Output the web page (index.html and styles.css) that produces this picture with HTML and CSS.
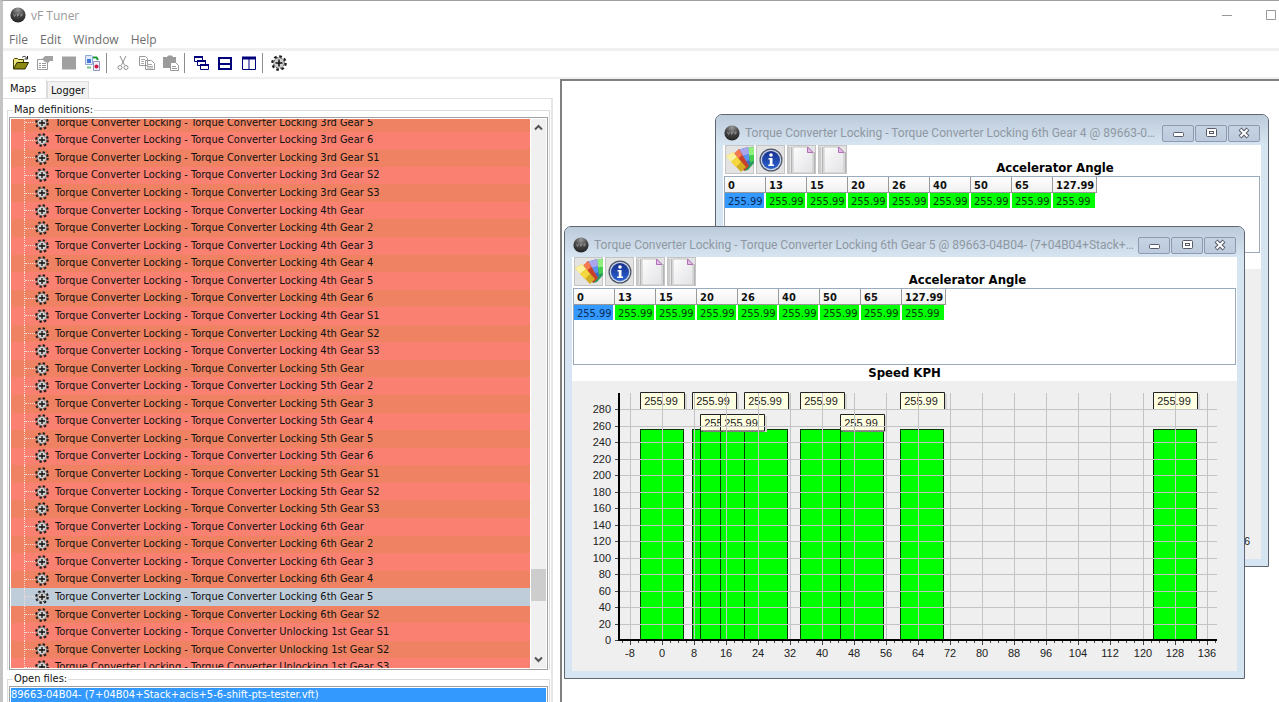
FILE: index.html
```html
<!DOCTYPE html>
<html lang="en">
<head>
    <meta charset="UTF-8">
    <title>vF Tuner</title>
    <meta name="viewport" content="width=device-width, initial-scale=1.0">
    <link rel="stylesheet" href="styles.css">
</head>
<body>

    <!-- Shared icons -->
    <svg class="defs" aria-hidden="true">
        <defs>
            <radialGradient id="ball" cx="50%" cy="15%" r="85%">
                <stop offset="0" stop-color="#9a9a9a"/>
                <stop offset="0.5" stop-color="#484848"/>
                <stop offset="1" stop-color="#222"/>
            </radialGradient>
            <linearGradient id="paper" x1="0" y1="0" x2="1" y2="1">
                <stop offset="0" stop-color="#fdfdfd"/>
                <stop offset="1" stop-color="#e2e2e6"/>
            </linearGradient>
            <linearGradient id="blue" x1="0" y1="0" x2="0" y2="1">
                <stop offset="0" stop-color="#16308c"/>
                <stop offset="1" stop-color="#2b62d0"/>
            </linearGradient>
        </defs>
        <symbol id="logo" viewBox="0 0 16 16">
            <circle cx="8" cy="8" r="7.6" fill="url(#ball)"/>
            <path d="M3.500 7l1 2.500L6 7M7.500 9.500V7h2M11 9.500V7H13M7.500 8.300h1.500M11 8.300h1.500" stroke="#999" stroke-width="0.8" fill="none"/>
        </symbol>
        <symbol id="gear" viewBox="0 0 16 16">
            <circle cx="8" cy="8" r="6.700" fill="none" stroke="#1c1c1c" stroke-width="2.200" stroke-dasharray="2.700 2.560"/>
            <circle cx="8" cy="8" r="5.400" fill="#cfcfcf" stroke="#444" stroke-width="1" stroke-dasharray="3 1.240"/>
            <path d="M8 4.500v7M4.500 8h7" stroke="#111" stroke-width="1.500"/>
        </symbol>
        <symbol id="palette" viewBox="0 0 28 28">
            <path d="M18 25l3-23 7-1v16l-6 7z" fill="#2c9a5c"/>
            <path d="M21 2l7-1v8l-7 1z" fill="#8ff07c"/>
            <path d="M21 10l7-1v6l-7 2z" fill="#45cf52"/>
            <path d="M17 24L12 4l10-3 2 17z" fill="#3f6cc8"/>
            <path d="M12 4l10-3 1 7-9 3z" fill="#a9a6ee"/>
            <path d="M14 11l9-3v6l-7 3z" fill="#5c93f0"/>
            <path d="M18 25L7 9l6-6 10 17z" fill="#c8402c"/>
            <path d="M7 9l6-6 3 6-5 5z" fill="#f47a50"/>
            <path d="M15 26L0 10l7-4 13 15z" fill="#d3ac20"/>
            <path d="M0 10l7-4 4 5-6 5z" fill="#fbf2a0"/>
            <path d="M5 16l6-5 4 5-5 5z" fill="#f5d740"/>
        </symbol>
        <symbol id="info" viewBox="0 0 24 24">
            <circle cx="12" cy="12" r="11.500" fill="#4c5468"/>
            <circle cx="12" cy="12" r="10.300" fill="#c9d3e6"/>
            <circle cx="12" cy="12" r="9" fill="url(#blue)"/>
            <circle cx="12" cy="7" r="1.800" fill="#fff"/>
            <path d="M9.500 10h4v6.500h1.500V18H9.300v-1.500h1.500v-5H9.500z" fill="#fff"/>
        </symbol>
        <symbol id="page" viewBox="0 0 28 28">
            <path d="M1 1v26M3.500 1v26M26.500 6v21" stroke="#b4b4b4"/>
            <path d="M5 1h15l5 5v21H5z" fill="url(#paper)" stroke="#c6c6c6"/>
            <path d="M19.500 1v5.500H25z" fill="#e3bde6" stroke="#b070b8"/>
        </symbol>
    </svg>

    <header class="title-bar">
        <svg class="app-logo"><use href="#logo"/></svg>
        <h1>vF Tuner</h1>
        <div class="app-controls">
            <button type="button" aria-label="Minimize"><svg width="10" height="10"><path d="M0 5.500h10" stroke="#999"/></svg></button>
            <button type="button" aria-label="Maximize"><svg width="10" height="10"><path d="M0.500 0.500h9v9h-9z" fill="none" stroke="#999"/></svg></button>
        </div>
    </header>

    <nav class="menu">
        <button type="button">File</button>
        <button type="button">Edit</button>
        <button type="button">Window</button>
        <button type="button">Help</button>
    </nav>

    <div class="toolbar">
        <button type="button" aria-label="Open">
            <svg viewBox="0 0 16 16"><path d="M0.500 14V4.500l1-1h3l1 1h5V7" fill="#e9e37a" stroke="#4a4600"/><path d="M0.500 14L4 7.500h11.500L12 14z" fill="#8e8a10" stroke="#2c2a00"/><path d="M9 2.500c2-2 4-1 5 1M14.500 1v3h-3" fill="none" stroke="#222"/></svg>
        </button>
        <button type="button" aria-label="Properties">
            <svg viewBox="0 0 16 16"><path d="M0.500 4.500h10v10h-10z" fill="#fff" stroke="#999"/><path d="M2 8.500h2M5 8.500h4M2 10.500h2M5 10.500h4M2 12.500h2M5 12.500h4" stroke="#999"/><path d="M5 4l3-3h8v5h-3l-2 2-3-1z" fill="#a2a2a2"/></svg>
        </button>
        <button type="button" aria-label="Save">
            <svg viewBox="0 0 16 16"><path d="M1 1.500h14v13H1z" fill="#a0a0a0"/></svg>
        </button>
        <button type="button" aria-label="Compare">
            <svg viewBox="0 0 16 16"><path d="M0.500 0.500h6l1 1v8h-7z" fill="#dfeaff" stroke="#8fa8d8"/><path d="M2 4h4v4H2z" fill="#4477d8"/><path d="M8.500 6.500h6v9h-6z" fill="#f3eef8" stroke="#8f95bd"/><circle cx="11.500" cy="11.500" r="2" fill="#d01840"/><path d="M8 2.500h3.500L13 5" fill="none" stroke="#1d9a38" stroke-width="2"/><path d="M2 12.500h4" stroke="#7cbf8a" stroke-width="2"/></svg>
        </button>
        <span class="sep"></span>
        <button type="button" aria-label="Cut">
            <svg viewBox="0 0 16 16"><path d="M5 1l4.500 9M11 1L6.500 10" stroke="#909090" fill="none"/><circle cx="5" cy="12.500" r="2" fill="none" stroke="#909090"/><circle cx="11" cy="12.500" r="2" fill="none" stroke="#909090"/></svg>
        </button>
        <button type="button" aria-label="Copy">
            <svg viewBox="0 0 16 16"><path d="M0.500 1.500h6l2 2v7h-8zM6.500 5.500h6l3 3v6h-9z" fill="#fff" stroke="#999"/><path d="M2 4.500h4M2 6.500h3M2 8.500h3M8 9.500h5M8 11.500h6M8 13h6" stroke="#aaa"/></svg>
        </button>
        <button type="button" aria-label="Paste">
            <svg viewBox="0 0 16 16"><path d="M0 2h4l1-1.500h4L10 2h3v11H0z" fill="#9b9b9b"/><path d="M7.500 7.500h5l3 3v5h-8z" fill="#fff" stroke="#999"/><path d="M9 11.500h4M9 13.500h5" stroke="#999"/></svg>
        </button>
        <span class="sep"></span>
        <button type="button" aria-label="Cascade">
            <svg viewBox="0 0 16 16" fill="#fff" stroke="#00007c"><path d="M1.500 1.500h8v5h-8zM4.500 5.500h8v5h-8zM7.500 9.500h8v5h-8z"/><path d="M1 2h9M4 6h9M7 10h9" stroke-width="2"/></svg>
        </button>
        <button type="button" aria-label="Tile horizontally">
            <svg viewBox="0 0 16 16" fill="#fff" stroke="#00007c"><path d="M2 3h12v11H2z" stroke-width="2"/><path d="M1 9h13" stroke-width="2"/></svg>
        </button>
        <button type="button" aria-label="Tile vertically">
            <svg viewBox="0 0 16 16" fill="#fff" stroke="#00007c"><path d="M1.500 2.500h13v12h-13zM8 2v12"/><path d="M1 3h14" stroke-width="3"/></svg>
        </button>
        <span class="sep"></span>
        <button type="button" aria-label="Settings"><svg><use href="#gear"/></svg></button>
    </div>

    <main class="workspace">

        <!-- Left side: maps tree and open files -->
        <aside class="sidebar">
            <div class="tabs" role="tablist">
                <button type="button" role="tab" aria-selected="true" class="tab active">Maps</button>
                <button type="button" role="tab" aria-selected="false" class="tab">Logger</button>
            </div>
            <div class="tab-page">
                <fieldset class="group maps-group">
                    <legend>Map definitions:</legend>
                    <div class="tree-box">
                        <div class="tree-view">
                            <ul class="tree" id="mapTree"></ul>
                        </div>
                        <div class="scrollbar">
                            <svg width="9" height="7"><path d="M1 5.500l3.500-3.500L8 5.500" fill="none" stroke="#555" stroke-width="2"/></svg>
                            <span class="track"><span class="thumb"></span></span>
                            <svg width="9" height="7"><path d="M1 1.500l3.500 3.500L8 1.500" fill="none" stroke="#555" stroke-width="2"/></svg>
                        </div>
                    </div>
                </fieldset>
                <fieldset class="group files-group">
                    <legend>Open files:</legend>
                    <ul class="file-list">
                        <li>89663-04B04- (7+04B04+Stack+acis+5-6-shift-pts-tester.vft)</li>
                    </ul>
                </fieldset>
            </div>
        </aside>

        <!-- Right side: map windows -->
        <section class="mdi" id="mdi"></section>
    </main>

    <!-- One map window, filled in by script.js -->
    <template id="windowTemplate">
        <article class="map-window">
            <header class="window-title">
                <svg class="window-logo"><use href="#logo"/></svg>
                <h2></h2>
                <div class="window-controls">
                    <button type="button" aria-label="Minimize"><svg width="14" height="12"><rect x="2.500" y="5.500" width="10" height="4" rx="1" fill="#fff" stroke="#555b66"/></svg></button>
                    <button type="button" aria-label="Maximize"><svg width="14" height="12"><rect x="2.500" y="1.500" width="10" height="8" rx="1" fill="#fff" stroke="#555b66"/><rect x="5.500" y="4.500" width="4" height="2" fill="#fff" stroke="#555b66"/></svg></button>
                    <button type="button" aria-label="Close"><svg width="14" height="12"><path d="M3 2l8 8M11 2l-8 8" stroke="#555b66" stroke-width="4"/><path d="M3.500 2.500l7 7M10.500 2.500l-7 7" stroke="#fff" stroke-width="2"/></svg></button>
                </div>
            </header>
            <div class="window-body">
                <div class="map-head">
                    <button type="button" class="tool" aria-label="Colours"><svg width="28" height="28"><use href="#palette"/></svg></button>
                    <button type="button" class="tool" aria-label="Info"><svg width="24" height="24"><use href="#info"/></svg></button>
                    <button type="button" class="tool" aria-label="Copy page"><svg width="28" height="28"><use href="#page"/></svg></button>
                    <button type="button" class="tool" aria-label="Paste page"><svg width="28" height="28"><use href="#page"/></svg></button>
                    <h3>Accelerator Angle</h3>
                </div>
                <div class="grid-box">
                    <table>
                        <thead><tr></tr></thead>
                        <tbody><tr></tr></tbody>
                    </table>
                </div>
                <h3 class="axis-title">Speed KPH</h3>
                <div class="chart"></div>
            </div>
        </article>
    </template>

    <script src="script.js"></script>
</body>
</html>
```
FILE: styles.css
```css
* {
    box-sizing: border-box;
}

body {
    margin: 0;
    height: 100vh;
    overflow: hidden;
    display: flex;
    flex-direction: column;
    border-top: 1px solid #a0a0a0;
    border-left: 3px solid #c4c4c4;
    background: white;
    color: #111;
    font-family: "DejaVu Sans Condensed", "DejaVu Sans", sans-serif;
    font-size: 11px;
}

h1, h2, h3, ul {
    margin: 0;
    padding: 0;
    list-style: none;
}

button {
    padding: 0;
    border: none;
    background: none;
    font: inherit;
    color: inherit;
}

.defs {
    position: absolute;
    width: 0;
    height: 0;
}

/* --- Title bar and menu --- */
.title-bar {
    display: flex;
    align-items: center;
    height: 28px;
    padding: 0 3px 0 7px;
}

.app-logo {
    width: 16px;
    height: 16px;
    margin-right: 5px;
}

.title-bar h1 {
    font: 12px "Open Sans", sans-serif;
    color: #999;
}

.app-controls {
    display: flex;
    gap: 34px;
    margin-left: auto;
}

.app-controls svg {
    display: block;
}

.menu {
    display: flex;
    align-items: center;
    gap: 12px;
    height: 22px;
    padding: 2px 0 0 6px;
    border-bottom: 3px solid #f0f0f0;
    font: 12px "Open Sans", sans-serif;
    line-height: 16px;
    color: #6d6d6d;
}

/* --- Toolbar --- */
.toolbar {
    display: flex;
    align-items: center;
    height: 28px;
    padding: 0 0 2px 6px;
    border-bottom: 2px solid #f0f0f0;
}

.toolbar button {
    width: 24px;
    height: 24px;
    display: grid;
    place-items: center;
}

.toolbar svg {
    width: 16px;
    height: 16px;
}

.sep {
    width: 1px;
    height: 20px;
    margin: 0 4px 0 1px;
    background: #8c8c8c;
}

/* --- Sidebar --- */
.workspace {
    flex: 1;
    min-height: 0;
    display: flex;
}

.sidebar {
    width: 557px;
    display: flex;
    flex-direction: column;
}

.tabs {
    display: flex;
    align-items: flex-end;
    height: 19px;
}

.tab {
    height: 17px;
    padding: 0 3px;
    border: 1px solid #dcdcdc;
    border-bottom: none;
    background: #f2f2f2;
}

.tab.active {
    height: 19px;
    padding: 0 10px 2px 6px;
    border-color: white #dcdcdc white white;
    background: white;
}

.tab-page {
    flex: 1;
    min-height: 0;
    display: flex;
    flex-direction: column;
    gap: 2px;
    margin-right: 7px;
    padding: 4px 1px 0 4px;
    border-top: 1px solid #e2e2e2;
    border-right: 2px solid #e6e6e6;
}

.group {
    margin: 0;
    min-width: 0;
    padding: 0 1px;
    border: 1px solid #dcdcdc;
}

.group legend {
    height: 14px;
    margin-left: 4px;
    padding: 0 1px;
    line-height: 14px;
}

.maps-group {
    flex: 1;
    min-height: 0;
    border-bottom: none;
}

.tree-box {
    height: 100%;
    display: flex;
    padding: 1px;
    border: 1px solid #a0a0a0;
}

.tree-view {
    flex: 1;
    min-width: 0;
    overflow: hidden;
}

/* the view is scrolled part way into a row at both ends */
.tree {
    display: grid;
    grid-auto-rows: 1fr;
    height: calc(100% + 13px);
    margin-top: -5px;
}

.tree li {
    display: flex;
    align-items: center;
    padding-left: 13px;
    background: #fa8072;
    line-height: 16px;
    white-space: nowrap;
}

.tree li:nth-child(odd) {
    background: #ee8262;
}

.tree li.selected {
    background: #bfcddb;
}

.branch {
    align-self: stretch;
    display: flex;
    align-items: center;
    width: 11px;
    border-left: 1px dotted #f4dcd4;
}

.branch::after {
    content: "";
    width: 100%;
    border-top: 1px dotted #f4dcd4;
}

.tree svg {
    width: 14px;
    height: 14px;
    margin-right: 6px;
}

.scrollbar {
    width: 16px;
    display: flex;
    flex-direction: column;
    align-items: center;
    gap: 5px;
    padding: 5px 0;
    border-left: 1px solid white;
    background: #f0f0f0;
}

.track {
    flex: 1;
    width: 100%;
    display: flex;
    flex-direction: column;
    justify-content: flex-end;
    padding-bottom: 50px;
}

.thumb {
    height: 32px;
    background: #cdcdcd;
}

.files-group {
    height: 30px;
    border-bottom: none;
}

.file-list {
    height: 100%;
    padding: 1px;
    border: 1px solid #a0a0a0;
    border-bottom: none;
}

.file-list li {
    height: 14px;
    line-height: 14px;
    background: #3399ff;
    color: white;
}

/* --- Map windows --- */
.mdi {
    position: relative;
    flex: 1;
    min-width: 0;
    overflow: hidden;
    border-top: 2px solid #808080;
    border-left: 2px solid #808080;
}

.map-window {
    position: absolute;
    display: flex;
    flex-direction: column;
    padding: 0 7px 7px;
    border: 1px solid #5f6670;
    border-radius: 7px 7px 0 0;
    background: #d7e4f2;
}

.map-window.back {
    left: 153px;
    top: 33px;
    width: 554px;
    height: 453px;
}

.map-window.front {
    left: 2px;
    top: 145px;
    width: 681px;
    height: 453px;
}

.window-title {
    display: flex;
    align-items: center;
    height: 30px;
    margin: 0 -7px;
    padding: 6px 8px 0 8px;
    border-radius: 6px 6px 0 0;
    background: linear-gradient(#bccbda, #d7e4f2);
}

.window-logo {
    width: 16px;
    height: 16px;
    margin-right: 5px;
    flex: none;
}

.window-title h2 {
    flex: 1;
    min-width: 0;
    overflow: hidden;
    white-space: nowrap;
    text-overflow: ellipsis;
    font: 12px Roboto, "Open Sans", sans-serif;
    color: #8f98a2;
}

.window-controls {
    display: flex;
    gap: 1px;
    margin-left: 4px;
}

.window-controls button {
    width: 32px;
    height: 17px;
    display: grid;
    place-items: center;
    border: 1px solid #8c9bb0;
    border-radius: 2px;
    background: linear-gradient(#c6d3e3, #bccadd);
}

.window-controls svg {
    display: block;
}

.window-body {
    flex: 1;
    min-height: 0;
    display: flex;
    flex-direction: column;
    background: white;
}

.map-head {
    display: flex;
    align-items: flex-start;
    gap: 2px;
    height: 31px;
    padding-left: 2px;
}

.tool {
    width: 29px;
    height: 29px;
    display: grid;
    place-items: center;
    background: #e3e3e3;
    border: 1px solid #c4c4c4;
}

.map-head h3 {
    flex: 1;
    align-self: flex-end;
}

.window-body h3 {
    font-size: 13px;
    line-height: 16px;
    text-align: center;
    color: black;
}

.grid-box {
    height: 77px;
    margin: 0 1px;
    border: 1px solid #9aabbd;
}

.grid-box table {
    table-layout: fixed;
    border-collapse: separate;
    border-spacing: 0;
}

.grid-box th,
.grid-box td {
    width: 41px;
    height: 16px;
    padding: 2px 0 0 3px;
    text-align: left;
    white-space: nowrap;
    line-height: 13px;
}

.grid-box th {
    border-right: 1px solid #999;
    border-bottom: 1px solid #999;
    background: linear-gradient(white, #f0f0f0);
}

.grid-box td {
    border-right: 2px solid white;
    border-bottom: 1px solid white;
    background: #00ff00;
    color: #0a3a0a;
}

.grid-box td.current {
    background: #3399ff;
    color: #0a2a5a;
}

.grid-box th:last-child {
    width: 44px;
}

/* --- Chart --- */
.chart {
    flex: 1;
    min-height: 0;
    overflow: hidden;
    background: #efefef;
}

.chart svg {
    display: block;
}

.chart text {
    font: 11px "Liberation Sans", Arial, sans-serif;
    fill: #222;
}

.bar {
    fill: #00ff00;
    stroke: #063806;
}

.tip {
    fill: #ffffe1;
    stroke: #222;
}

.tip-shadow {
    fill: #d6d6d6;
}

.grid-line {
    stroke: #c3c3c3;
}

.axis {
    stroke: black;
    stroke-width: 2;
}

.tick {
    stroke: #444;
}
```
FILE: script.js
```js
const angles = [0, 13, 15, 20, 26, 40, 50, 65, 127.99];
const value = 255.99;
const fileName = "89663-04B04- (7+04B04+Stack+acis+5-6-shift-pts-tester.vft)";

// labels that would collide are dropped to a second line
const lowLabels = [15, 20, 50];

const mapNames = [];
function addMaps(kind, gear, suffixes) {
    suffixes.forEach(s => mapNames.push(("Torque Converter " + kind + " " + gear + " Gear " + s).trim()));
}
addMaps("Locking", "3rd", ["5", "6", "S1", "S2", "S3"]);
addMaps("Locking", "4th", ["", "2", "3", "4", "5", "6", "S1", "S2", "S3"]);
addMaps("Locking", "5th", ["", "2", "3", "4", "5", "6", "S1", "S2", "S3"]);
addMaps("Locking", "6th", ["", "2", "3", "4", "5", "S2"]);
addMaps("Unlocking", "1st", ["S1", "S2", "S3"]);

function fillTree() {
    const tree = document.getElementById("mapTree");
    mapNames.forEach(name => {
        const li = document.createElement("li");
        if (name.endsWith("6th Gear 5")) li.className = "selected";
        li.innerHTML = '<span class="branch"></span><svg><use href="#gear"/></svg><span></span>';
        li.lastChild.textContent = "Torque Converter Locking - " + name;
        tree.appendChild(li);
    });
}

function drawChart(box, minX, maxX) {
    const w = box.clientWidth;
    const h = box.clientHeight;
    const left = 47, right = w - 20, top = 12, bottom = h - 31;
    const x = v => Math.round(left + (v - minX) * (right - left) / (maxX - minX));
    const y = v => Math.round(bottom - v * (bottom - top) / 300);
    const line = (x1, y1, x2, y2, cls) => `<line class="${cls}" x1="${x1}" y1="${y1}" x2="${x2}" y2="${y2}"/>`;
    let out = "";

    const half = x(5.5) - x(0);
    angles.forEach(a => {
        out += `<rect class="bar" x="${x(a) - half + 0.5}" y="${y(value) + 0.5}" width="${half * 2 - 1}" height="${bottom - y(value) - 1}"/>`;
    });

    angles.forEach(a => {
        const low = lowLabels.includes(a);
        const tx = x(a) - 22;
        const ty = low ? top + 21 : top - 1;
        out += `<rect class="tip-shadow" x="${tx + 3}" y="${ty + 2}" width="44" height="16"/>`;
        out += `<path class="tip" d="M${tx + 0.5} ${ty + 17}V${ty + 0.5}H${tx + 44.5}V${ty + 17}${low ? "z" : ""}"/>`;
        out += `<text x="${x(a) - 1}" y="${ty + 13}" text-anchor="middle">${value}</text>`;
    });

    for (let v = 0; v <= 280; v += 20) {
        if (v > 0) out += line(left, y(v) + 0.5, right, y(v) + 0.5, "grid-line");
        out += line(left - 4, y(v) + 0.5, left, y(v) + 0.5, "tick");
        out += `<text x="${left - 8}" y="${y(v) + 4}" text-anchor="end">${v}</text>`;
    }
    for (let v = -8; v <= 136; v += 8) {
        out += line(x(v) + 0.5, top, x(v) + 0.5, bottom, "grid-line");
        out += line(x(v) + 0.5, bottom, x(v) + 0.5, bottom + 5, "tick");
        out += `<text x="${x(v)}" y="${bottom + 17}" text-anchor="middle">${v}</text>`;
    }
    for (let v = -10; v <= maxX; v += 2) {
        out += line(x(v) + 0.5, bottom, x(v) + 0.5, bottom + 3, "tick");
    }
    out += line(left, top, left, bottom + 1, "axis");
    out += line(left, bottom, right, bottom, "axis");
    box.innerHTML = `<svg width="${w}" height="${h}">${out}</svg>`;
}

function openWindow(place, mapName, minX, maxX) {
    const win = document.getElementById("windowTemplate").content.cloneNode(true).firstElementChild;
    win.classList.add(place);
    win.querySelector("h2").textContent = "Torque Converter Locking - " + mapName + " @ " + fileName;
    angles.forEach((a, i) => {
        const th = document.createElement("th");
        th.scope = "col";
        th.textContent = a;
        win.querySelector("thead tr").appendChild(th);
        const td = document.createElement("td");
        td.textContent = value;
        if (i === 0) td.className = "current";
        win.querySelector("tbody tr").appendChild(td);
    });
    document.getElementById("mdi").appendChild(win);
    drawChart(win.querySelector(".chart"), minX, maxX);
}

fillTree();
openWindow("back", "Torque Converter Locking 6th Gear 4", -10.7, 136);
openWindow("front", "Torque Converter Locking 6th Gear 5", -10.7, 138.6);
```
